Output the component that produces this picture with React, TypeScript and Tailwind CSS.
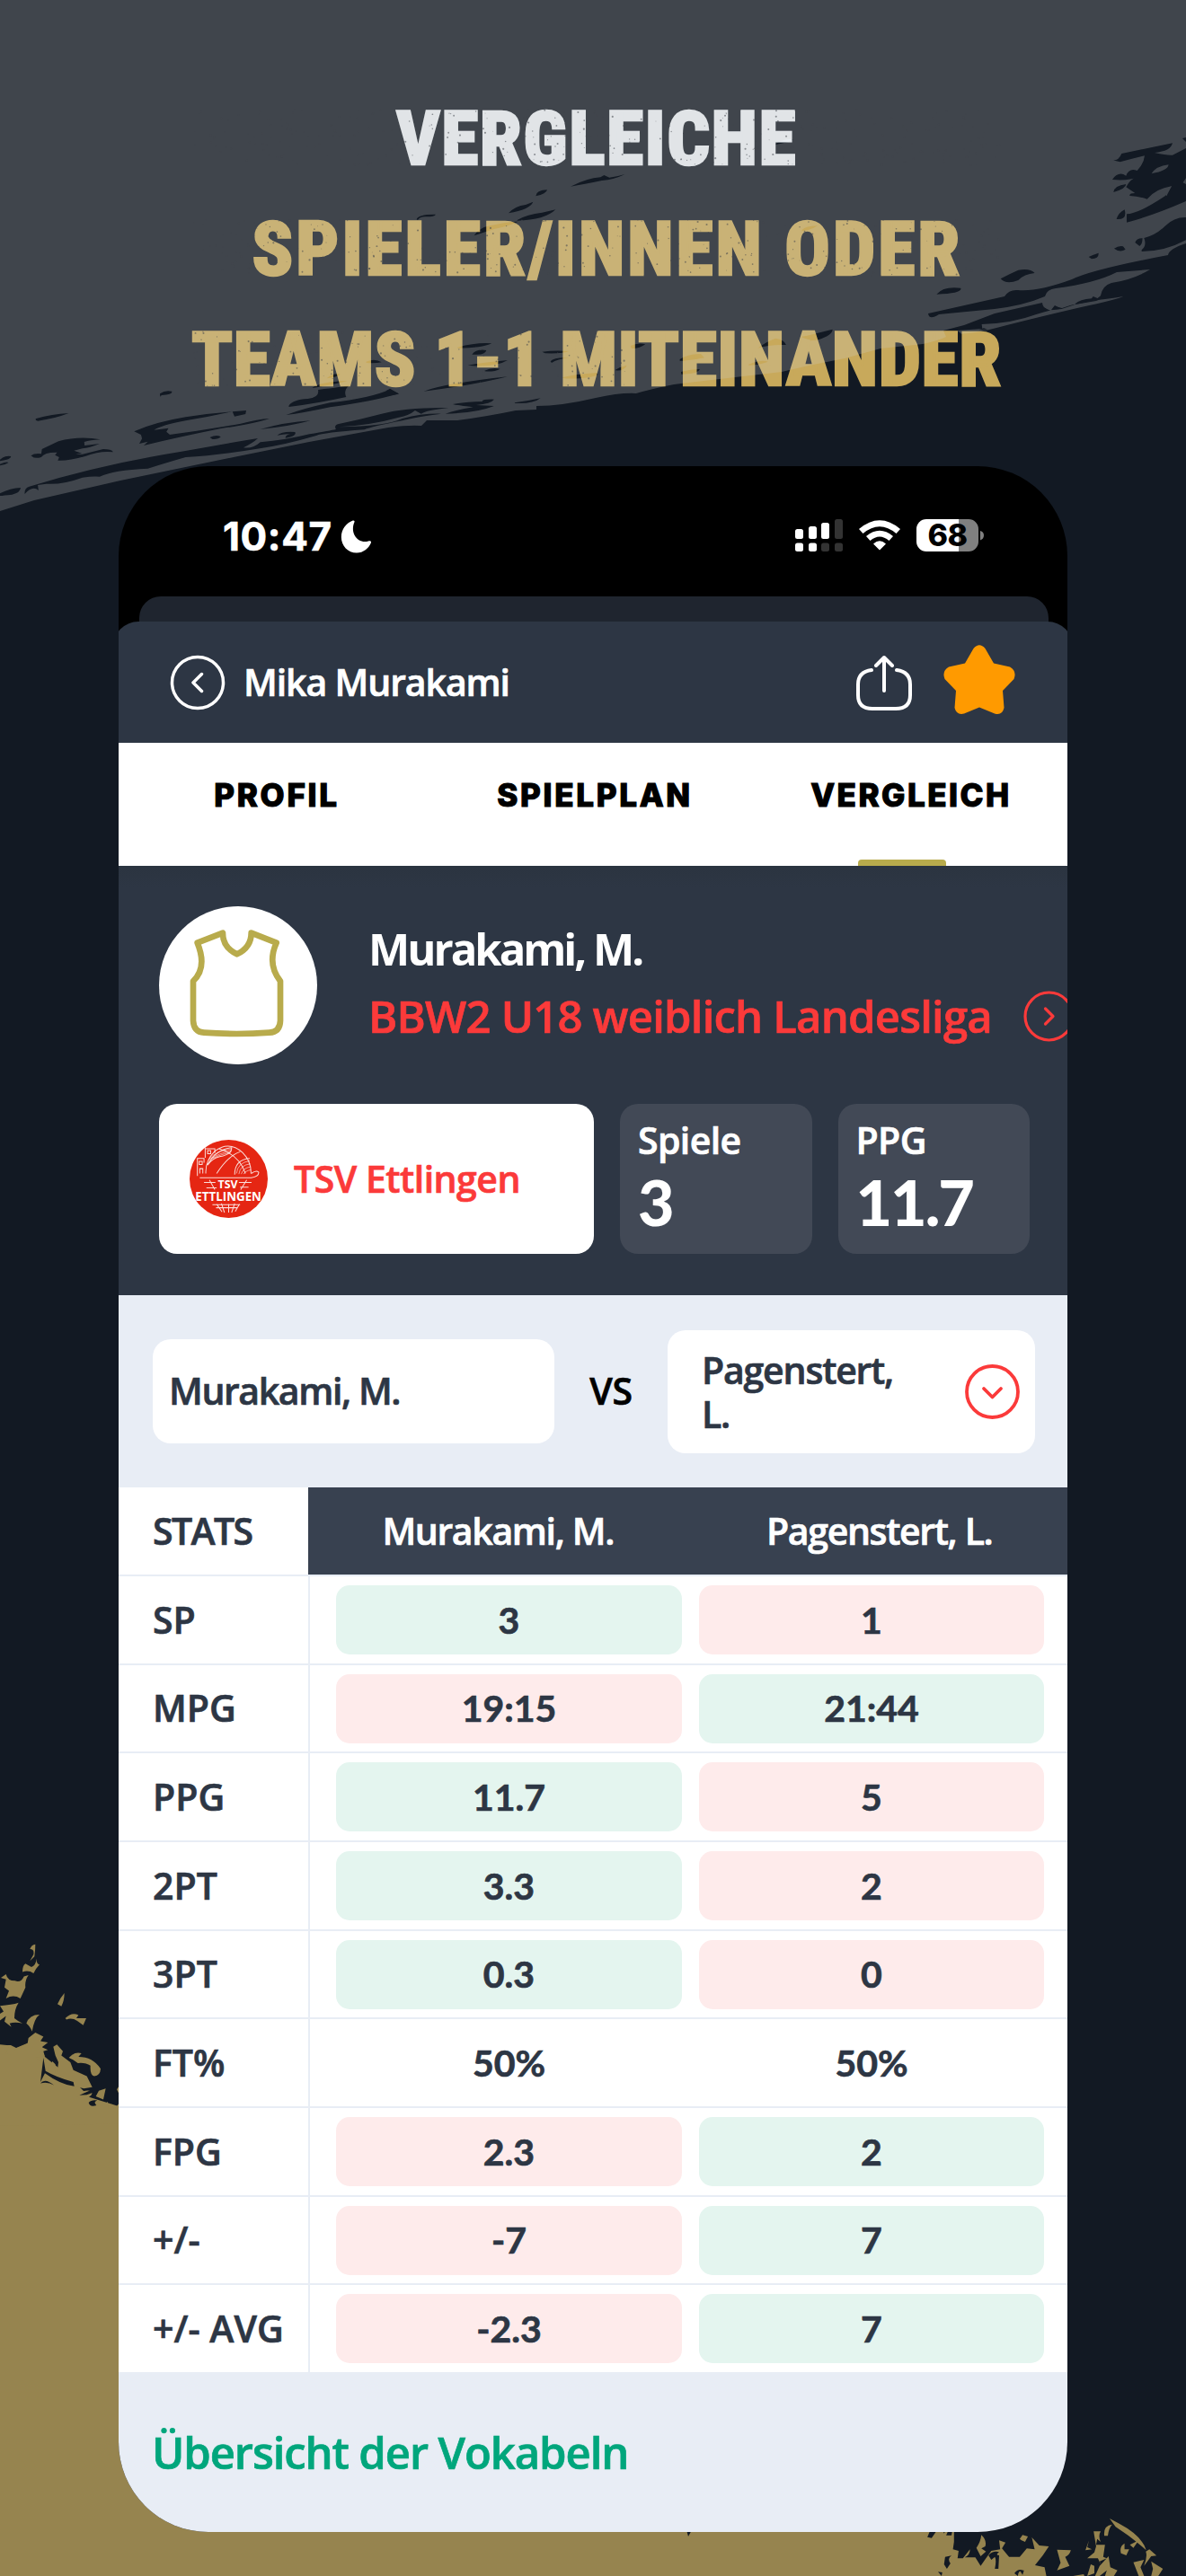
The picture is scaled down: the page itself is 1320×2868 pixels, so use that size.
import React from "react";

type Tone = "good" | "bad" | "even";
type Row = { label: string; left: string; right: string; l: Tone; r: Tone };

const rows: Row[] = [
  { label: "SP", left: "3", right: "1", l: "good", r: "bad" },
  { label: "MPG", left: "19:15", right: "21:44", l: "bad", r: "good" },
  { label: "PPG", left: "11.7", right: "5", l: "good", r: "bad" },
  { label: "2PT", left: "3.3", right: "2", l: "good", r: "bad" },
  { label: "3PT", left: "0.3", right: "0", l: "good", r: "bad" },
  { label: "FT%", left: "50%", right: "50%", l: "even", r: "even" },
  { label: "FPG", left: "2.3", right: "2", l: "bad", r: "good" },
  { label: "+/-", left: "-7", right: "7", l: "bad", r: "good" },
  { label: "+/- AVG", left: "-2.3", right: "7", l: "bad", r: "good" },
];

const toneClass: Record<Tone, string> = {
  good: "bg-[#e4f5ef]",
  bad: "bg-[#feebeb]",
  even: "bg-transparent",
};

/* Worn-ink specks scattered over the headline. */
const specks = (() => {
  let seed = 7;
  const rnd = () => {
    seed = (seed * 16807) % 2147483647;
    return seed / 2147483647;
  };
  const out: { x: number; y: number; r: number }[] = [];
  while (out.length < 900) {
    const x = 216 + rnd() * 900;
    const line = Math.floor(rnd() * 3);
    const y = 122 + line * 123 + rnd() * 62;
    const r = 0.4 + rnd() * 0.7;
    if (line === 2 && x > 700) continue;
    out.push({ x, y, r });
  }
  return out;
})();

function BrushTop() {
  return (
    <svg className="pointer-events-none absolute inset-x-0 top-0 h-[620px] w-[1320px]" viewBox="0 0 1320 620" aria-hidden="true">
      <mask id="brush" maskUnits="userSpaceOnUse" x="0" y="0" width="1320" height="620">
        <rect width="1320" height="620" fill="#fff" />
        <g fill="#000">
          <path d="M0 569 38 557 134 535 245 512 344 492 432 476Q455 473 469 474L475 468H509Q540 464 574 457L597 456V452Q625 452 663 443 690 437 708 438 725 433 750 428L870 414 900 407 940 399 980 388 1027 383Q1045 379 1053 375L1050 368 1073 362 1107 349 1160 337Q1160 343 1170 346L1174 341 1182 343 1197 338 1220 330 1225 329Q1227 318 1237 315 1262 311 1280 300L1243 303Q1220 315 1175 321 1165 322 1163 330 1140 340 1107 344L1045 350Q1034 357 1033 349L1118 330Q1123 322 1133 323 1155 325 1193 311 1215 300 1300 284 1301 277 1320 271V620H0Z" />
          <g transform="translate(0 360) scale(.3827 .3333)">
            <path d="M105 318Q150 303 200 300 160 318 110 326Q100 322 105 318ZM465 235Q480 222 500 227 503 238 470 240L466 245ZM90 442Q100 433 120 436L122 420Q150 405 170 394 230 375 292 388 262 390 245 396L246 408 290 402Q260 416 240 418L215 425 238 434Q205 440 240 437L300 420Q325 420 329 430 290 425 250 443 200 460 168 458L172 447 160 440 166 431Q130 430 120 447 100 454 90 442ZM0 455Q15 440 32 444 32 455 0 460ZM0 470Q20 460 25 465 12 475 0 475ZM390 361Q450 330 540 313 610 300 675 295 610 312 540 325 470 340 448 356L490 350 484 362 494 372Q470 380 455 378 580 360 700 335 750 320 784 318 740 335 640 352 520 380 418 408L430 395 405 402 413 385 410 372ZM676 295 716 291 714 303 682 311ZM610 381Q630 370 642 379 635 388 618 387ZM0 568Q30 550 60 549 60 565 35 572 10 575 0 576ZM72 570Q70 550 85 545 300 470 520 430 690 395 750 384 735 400 708 415 735 420 757 397 830 390 900 370 960 358 977 354 970 340 985 336 1050 320 1110 302 1180 280 1305 282 1240 290 1225 302L1207 291Q1190 308 1160 314 1080 340 985 346 1120 345 1170 318 1230 300 1283 302 1200 315 1170 325 1080 345 1060 355 940 365 920 375 830 405 760 417 640 440 540 447 500 460 430 485 330 490 290 512 270 510 240 515 180 540 135 536L110 540 112 558Q95 540 72 570ZM756 354Q830 330 903 325 840 345 756 354ZM806 374Q820 360 858 363 865 376 830 383 830 372 845 370 830 368 806 374ZM840 275Q850 255 895 252 930 248 925 222 1000 212 1015 208 998 225 1007 246 920 268 840 279ZM832 306Q880 285 960 265 1080 250 1135 220L1160 235Q1080 262 960 280 880 300 832 306ZM908 216Q930 195 1010 192 980 203 908 216ZM950 184Q970 165 990 170 980 180 950 184ZM1065 128Q1090 115 1110 130 1090 135 1065 132Z" />
          </g>
          <g transform="translate(430 90) scale(.3333)">
            <path d="M615 353Q670 325 715 322L727 315 745 323Q770 320 797 312 760 330 720 333 660 345 615 353ZM499 385Q500 365 537 364 535 378 499 385ZM408 442Q430 418 465 414L490 404Q480 430 408 442ZM437 465Q470 445 520 440L565 430Q530 465 437 467ZM101 463Q105 445 165 446 160 455 130 454 110 455 105 465ZM293 517Q310 490 345 484 400 470 440 470 410 485 360 495ZM1300 210Q1330 192 1358 196 1350 205 1300 213ZM238 890Q300 873 352 877 320 893 238 893ZM286 914Q300 895 334 900 330 915 300 914ZM272 950Q330 940 405 933 370 955 290 952ZM328 968Q350 957 380 962 360 973 328 970ZM125 1037Q200 1010 405 988 300 1015 125 1037ZM520 905Q560 900 610 903 590 912 530 910ZM548 937Q560 922 610 925 570 930 552 942ZM590 990Q630 980 700 975 720 982 680 990 620 998 590 993ZM765 965Q780 955 803 950 795 970 765 967ZM815 885Q840 873 865 880 840 897 818 893ZM980 930Q1010 912 1050 912L1062 925Q1020 935 980 935ZM984 972Q1010 964 1047 963 1040 980 985 980ZM1240 893Q1270 870 1300 860 1330 865 1335 882 1280 880 1240 893ZM1210 947Q1250 930 1275 938 1240 950 1210 950ZM1385 855Q1410 850 1490 830 1490 850 1440 865 1410 868 1385 855ZM1388 498Q1400 485 1440 484 1420 498 1388 502ZM222 1080Q260 1073 320 1071 320 1063 360 1064 350 1078 300 1083L360 1086Q300 1110 197 1112 230 1100 290 1090 240 1085 222 1080ZM428 1075Q470 1070 515 1060 490 1080 430 1077ZM0 1035 12 1028 42 1046 0 1053Z" />
          </g>
          <g transform="translate(900 130) scale(.3333)">
            <path d="M1014 145Q1035 148 1045 123L1215 88Q1210 115 1155 120 1200 130 1215 128L1260 105V282Q1150 330 1062 353V325Q1100 325 1190 265L1212 232Q1160 240 1130 275 1100 265 1072 264 1070 255 1090 255L1060 235Q1075 205 1100 200 1070 215 1014 210 1035 180 1060 197 1070 170 1097 180 1120 155 1122 130 1080 140 1040 151ZM1018 252Q1020 230 1060 225 1060 240 1018 252ZM1028 342Q1035 320 1055 310 1065 345 1028 342ZM1248 72 1260 69V84ZM1090 420Q1095 405 1115 406 1115 425 1105 432ZM1112 445Q1130 430 1120 405 1160 395 1190 365 1220 335 1260 336V412Q1190 450 1112 450ZM1020 440Q1035 430 1050 433L1058 443Q1040 455 1020 440ZM935 468Q950 460 968 455 970 475 945 475ZM641 541Q670 525 700 512 740 505 755 522 720 525 700 546 660 562 641 541ZM427 593Q450 565 508 572 515 590 427 593ZM5 740Q40 725 62 722 50 745 5 748Z" />
          </g>
        </g>
        <g fill="#fff" transform="translate(900 130) scale(.3333)">
          <path d="M497 714 580 708 578 693Q680 690 760 660 820 640 845 642L890 627 960 612Q1010 608 1050 600 1040 608 900 638 720 680 600 712 540 725 510 725ZM1145 190Q1160 165 1202 160 1200 180 1145 190ZM1186 256Q1185 240 1212 232L1195 265ZM1250 220 1260 205V225Z" />
          <path d="M795 590H960L975 598 960 610 890 627 820 632 810 647 785 635Z" />
        </g>
        <g fill="#000" transform="translate(900 130) scale(.3333)">
          <path d="M890 625Q905 610 945 607L950 600 970 608 1000 600 960 615 890 627ZM810 645 822 630 845 642ZM568 712 585 706 598 712Z" />
        </g>
      </mask>
      <rect width="1320" height="620" fill="#cfcfcb" fillOpacity=".246" mask="url(#brush)" />
      <g fill="#41454c" fillOpacity=".55">
        {specks.map((s, i) => (
          <circle key={i} cx={s.x} cy={s.y} r={s.r} />
        ))}
      </g>
    </svg>
  );
}

function BrushBottom() {
  return (
    <svg className="pointer-events-none absolute inset-x-0 bottom-0 h-[768px] w-[1320px]" viewBox="0 2100 1320 768" fill="#96844f" aria-hidden="true">
      <path d="M132 2345V2700L250 2800H1004L1010 2868H0V2277L12 2277 18 2280 30 2275 44 2268 50 2290 75 2310 100 2335Z" />
      <g transform="translate(0 2100) scale(.3333 .4898)">
        <path d="M0 360 30 362 20 380 38 385 55 368 92 358 95 345 118 333 145 342 135 352 160 355 140 366 160 372 130 378 150 385 118 390 140 400 135 445 180 452 205 440 250 455 270 480 300 480 310 498 340 500 360 490 362 508 375 495 380 508 396 495V540L0 545Z" />
        <path d="M3 208 20 200Q25 215 50 215 70 220 80 205L95 202Q82 215 85 230 75 245 68 255 45 245 20 255L30 238 15 230 20 212ZM75 195Q75 180 85 176L105 184Q120 180 122 165 122 178 132 178 118 188 112 198 95 190 75 195ZM100 170 112 155Q115 143 100 143 105 133 118 132 118 145 115 160ZM0 272Q40 270 62 265 48 280 48 300 62 308 75 312 50 308 32 312L38 320 15 308 20 295 0 305V290L12 285ZM88 312Q98 292 132 292 115 300 107 330 100 318 88 312ZM192 268Q200 255 215 243 215 260 205 273ZM218 300Q240 285 262 293L255 300 288 300 278 316 258 306Q240 298 222 303ZM178 365 190 360 210 375 205 385 235 400 245 418 290 432 308 457 280 460 250 455 215 432 190 428 195 400 185 385ZM230 390Q250 375 272 380L262 388Q310 388 336 415 335 430 315 432 300 430 302 408 285 400 260 402L245 395ZM150 428 175 398 185 405 185 425ZM256 480Q270 462 300 465 315 470 300 478ZM320 478 330 465 353 460 345 485ZM390 462 396 456V470Z" />
        <path fill="#121923" d="M145 390 152 420Q190 435 245 445L248 455Q200 450 150 425L135 445ZM135 448Q150 435 180 452 160 444 135 448ZM265 475 305 463 315 468 290 474ZM296 492Q305 485 325 487 310 490 322 498 300 503 296 492Z" />
      </g>
      <g transform="translate(700 2600) scale(.3954 .3333)">
        <path d="M0 655H915V690L912 715 928 720 925 745 940 745 960 715Q960 735 945 742L975 742 990 770 1005 745 1020 720 1045 715 1042 685 1060 692 1050 712 1070 740 1100 740 1120 712 1142 715 1134 675 1155 702 1182 705 1165 735 1143 768 1170 775 1175 804H0ZM978 710Q990 690 992 667 1008 685 1003 705L992 712 1005 722 990 738ZM1100 680 1108 667 1123 672 1115 690 1105 685ZM1205 716 1244 718Q1240 735 1228 740L1240 770 1205 785 1215 760ZM1285 718 1295 685 1290 708 1303 715ZM1308 655 1328 655Q1320 670 1328 690L1318 680 1315 700 1340 700 1335 740 1345 745 1325 755 1330 770 1320 745 1290 745 1310 725 1315 705ZM1338 670Q1335 635 1360 632 1350 645 1348 670ZM1353 612 1378 628Q1445 670 1456 718 1430 690 1405 668L1370 640ZM1385 728Q1380 705 1395 695L1395 715 1408 715 1400 735ZM1410 700 1435 685 1420 710ZM1450 770Q1460 740 1455 722L1465 715 1485 736 1470 738ZM1420 758 1450 750 1440 775 1450 804H1435ZM1470 755 1503 780 1490 804H1470L1475 780ZM1290 804 1300 765 1310 770 1310 795ZM1312 804 1325 770 1350 738 1355 775 1375 785 1365 804H1340L1345 785 1325 804ZM1250 804 1280 798 1282 804Z" />
        <path fill="#121923" d="M163 655H175L167 672ZM847 655H865L852 677 840 674ZM885 655H890L887 662ZM893 668 898 655H910L908 668ZM887 765 890 740 908 736Q895 745 905 762L895 780ZM870 790 882 792 880 804ZM1012 735Q1025 718 1042 724 1030 735 1042 735L1040 780H1030Q1035 750 1030 740L1020 750ZM1085 795Q1095 778 1110 785 1095 785 1095 804ZM1100 785H1112L1108 800Z" />
      </g>
    </svg>
  );
}

function StatusIcons() {
  return (
    <svg className="h-9 w-[210px] overflow-visible" viewBox="0 0 210 36" aria-hidden="true">
      <g fill="#fff">
        <rect y="11" width="9" height="11" rx="2.5" />
        <rect x="15" y="8" width="9" height="14" rx="2.5" />
        <rect x="29" y="4" width="9" height="18" rx="2.5" />
        <rect y="26.500" width="9" height="9.500" rx="2.500" />
        <rect x="15" y="26.500" width="9" height="9.500" rx="2.500" />
      </g>
      <g fill="#333">
        <rect x="44" width="9" height="22" rx="2.500" />
        <rect x="29" y="26.500" width="9" height="9.500" rx="2.500" />
        <rect x="44" y="26.500" width="9" height="9.500" rx="2.500" />
      </g>
      <g fill="#fff">
        <path d="M71 11Q94-8.500 117 11L112.500 16Q94 .5 75.500 16ZM79 19Q94 6.500 109 19L104.500 24Q94 15 83.500 24ZM87 27.500Q94 21 101 27.500L94 34.500Z" />
        <path d="M146 0H182V36H146A11 11 0 0 1 135 25V11A11 11 0 0 1 146 0Z" />
      </g>
      <path fill="#808080" d="M182 0H193A11 11 0 0 1 204 11V25A11 11 0 0 1 193 36H182ZM206 13Q210 14 210 18T206 23.500Z" />
      <text x="169.500" y="30" textAnchor="middle" fontFamily="Inter" fontWeight="800" fontSize="34" letterSpacing="-.5" fill="#000">68</text>
    </svg>
  );
}

function ClubLogo() {
  return (
    <svg className="size-[87px] shrink-0" viewBox="0 0 260 260" aria-hidden="true">
      <defs>
        <clipPath id="disc"><circle cx="130" cy="130" r="130" /></clipPath>
      </defs>
      <g clipPath="url(#disc)">
        <rect width="260" height="260" fill="#e52613" />
        <g fill="none" stroke="#fff" strokeWidth="3" strokeOpacity=".85">
          <path d="M54 112Q52 70 84 38 130 2 176 42 206 72 204 112M90 112Q130 52 168 40M98 30Q165 50 186 112M60 82Q90 30 140 26 140 50 100 56 75 62 60 84M150 116Q150 66 200 62" />
          <path d="M64 66Q90 34 138 32M70 64Q100 42 140 38M76 62Q110 46 136 44M156 112Q160 76 200 70M164 114Q168 84 202 80M172 114Q178 94 202 90M180 114Q184 104 204 100" strokeWidth="2" />
          <path d="M26 120V62H48V76M34 112V96H44V112M32 72H42V82H32ZM52 60V20L78 4M54 30H84V44M60 36H70V46H60ZM34 126H205Q230 122 230 108 222 100 205 112" />
          <path d="M48 142H86M56 160H90M66 134 84 166M164 142H206M168 158H196M190 134 170 166M76 216H168M88 226H158M90 214 108 240M106 212 116 242M130 214V242M150 212 140 242M166 214 152 238" />
        </g>
        <text x="127" y="162" textAnchor="middle" fontFamily="Open Sans" fontWeight="700" fontSize="37" fill="#fff">TSV</text>
        <text x="129" y="203" textAnchor="middle" fontFamily="Open Sans" fontWeight="700" fontSize="41" textLength="220" lengthAdjust="spacingAndGlyphs" fill="#fff">ETTLINGEN</text>
      </g>
    </svg>
  );
}

function StatCard({ label, value }: { label: string; value: string }) {
  return (
    <div className="flex h-[167px] w-[213.500px] flex-col rounded-[20px] bg-[#424956] pt-[13px] pl-5 text-white">
      <span className="text-[41px] leading-[54px] font-semibold tracking-[-0.600px] [-webkit-text-stroke:0.7px]">{label}</span>
      <span className="text-[70px] leading-[84px] font-black tracking-[-2px] font-[Lato]">{value}</span>
    </div>
  );
}

export default function App() {
  return (
    <main className="relative flex h-[2868px] w-[1320px] flex-col items-center overflow-hidden bg-[#121923] font-['Open_Sans',sans-serif]">
      <h1 className="flex h-[519px] flex-col items-center pt-[93px] pl-2 text-center font-[Roboto] text-[84px] leading-[123px] font-extrabold font-stretch-75% text-[#c8a95b] [-webkit-text-stroke:2.500px] [stroke-linejoin:round]">
        <span className="tracking-[1.500px] text-[#e7ecf1]">VERGLEICHE</span>
        <span className="pl-6 tracking-[3px]">SPIELER/INNEN ODER</span>
        <span className="tracking-[0.600px]">TEAMS 1-1 MITEINANDER</span>
      </h1>
      <BrushTop />
      <BrushBottom />

      <div className="relative flex h-[2300px] w-[1056px] flex-col overflow-hidden rounded-[100px] bg-black">
        <div className="flex h-[145px] shrink-0 items-start justify-between pt-[59px] pr-[93px] pl-[116px]">
          <div className="flex items-center gap-2 text-white">
            <span className="font-[Inter] text-[44px] leading-[38px] font-bold tracking-[0.600px] [-webkit-text-stroke:0.6px]">10:47</span>
            <svg className="size-[37px]" viewBox="0 0 36 40" fill="#fff" aria-hidden="true">
              <path d="M14 .6C15 0 16.500 1 15.800 2.500 10 16 20 29 32.500 25.500 34.500 24.800 36.300 25.500 35.800 27.300 33 34 26.500 39.500 18.500 39.500 8 39.500 0 31 0 20.500 0 11 6 3.500 14 .6Z" />
            </svg>
          </div>
          <StatusIcons />
        </div>
        <div className="mr-[21px] ml-[23px] h-7 shrink-0 rounded-t-3xl bg-[#1f252f]" />
        <header className="-mx-1.5 flex h-[135px] shrink-0 items-center rounded-t-[28px] bg-[#2d3644] pr-16 pl-[63px]">
          <svg className="size-[62px]" viewBox="0 0 62 62" fill="none" stroke="#fff" strokeWidth="3.500" strokeLinecap="round" strokeLinejoin="round" aria-hidden="true">
            <circle cx="31" cy="31" r="28.500" />
            <path d="M35.500 21.500 26 31l9.500 9.500" />
          </svg>
          <span className="ml-5 grow text-[41px] font-semibold tracking-[-1.100px] text-white [-webkit-text-stroke:0.7px]">Mika Murakami</span>
          <svg className="size-[62px]" viewBox="0 0 62 62" fill="none" stroke="#fff" strokeWidth="4" strokeLinecap="round" strokeLinejoin="round" aria-hidden="true">
            <path d="M17 17Q2 19 2 33V45Q2 60 18 60H44Q60 60 60 45V33Q60 19 45 17M31 40V3M22 12 31 3l9 9" />
          </svg>
          <svg className="mb-[6px] ml-[35px] h-[78px] w-[80px]" viewBox="0 0 80 78" fill="#ff9a00" aria-hidden="true">
            <path d="M33.500 4Q40-3.500 46.500 4L56 20.500 74 24.500Q82 29 78.500 38L66 51 67.500 70Q65.500 79 57 76.500L40 69.500 23 76.500Q14.500 78.500 12.500 70L14 51 1.500 38Q-2 29 6 24.500L24 20.500Z" />
          </svg>
        </header>

        <nav className="grid h-[137px] shrink-0 grid-cols-3 bg-white text-center font-[Inter] text-[35px] font-extrabold text-black [-webkit-text-stroke:1.100px]">
          <span className="pt-[32px] tracking-[2.700px]">PROFIL</span>
          <span className="pt-[32px] pl-1 tracking-[2.700px]">SPIELPLAN</span>
          <span className="flex flex-col items-center justify-between pt-[32px] pl-1 tracking-[2.500px]">
            <span>VERGLEICH</span>
            <span className="-ml-[20px] h-[7px] w-[98px] rounded-t bg-[#b8ab4c]" />
          </span>
        </nav>

        <section className="flex h-[478px] shrink-0 flex-col bg-[#2d3644] bg-linear-to-b from-[#2b3440] to-[#2d3644] to-5% pt-[45px] pl-[45px]">
          <div className="flex h-[176px]">
            <div className="flex size-[176px] shrink-0 items-center justify-center rounded-full bg-white">
              <svg className="size-[176px]" viewBox="0 0 528 528" fill="none" stroke="#b8ab4c" strokeWidth="20" strokeLinejoin="round" aria-hidden="true">
                <path d="M128 122 213 89Q212 137 260 160 308 137 308 89L392 122Q360 193 405 250V382Q404 420 368 422 260 430 150 422 116 420 114 382V250Q162 205 128 122Z" />
              </svg>
            </div>
            <div className="ml-[57px] flex flex-col pt-[9px]">
              <span className="text-[49px] leading-[76px] font-bold tracking-[-3px] text-white">Murakami, M.</span>
              <div className="flex items-center">
                <span className="w-[729px] shrink-0 text-[49px] leading-[74px] font-semibold tracking-[-0.800px] whitespace-nowrap text-[#fb3a3a] [-webkit-text-stroke:0.7px]">BBW2 U18 weiblich Landesliga</span>
                <svg className="size-[57px] shrink-0" viewBox="0 0 57 57" fill="none" stroke="#fb3a3a" strokeWidth="3.200" strokeLinecap="round" strokeLinejoin="round" aria-hidden="true">
                  <circle cx="28.500" cy="28.500" r="26.500" />
                  <path d="m24.500 20 8.500 8.500-8.500 8.500" />
                </svg>
              </div>
            </div>
          </div>
          <div className="mt-11 flex">
            <div className="flex h-[167px] w-[484px] items-center rounded-[20px] bg-white pl-[34px]">
              <ClubLogo />
              <span className="ml-[29px] text-[41px] font-semibold tracking-[-0.500px] text-[#fb3a3a] [-webkit-text-stroke:0.7px]">TSV Ettlingen</span>
            </div>
            <div className="ml-[29px] flex gap-[29px]">
              <StatCard label="Spiele" value="3" />
              <StatCard label="PPG" value="11.7" />
            </div>
          </div>
        </section>

        <section className="flex h-[214px] shrink-0 items-center bg-[#e8edf5] pl-[38px] text-[41px] font-semibold text-[#2d3644] [-webkit-text-stroke:0.7px]">
          <div className="flex h-[116px] w-[447px] items-center rounded-[20px] bg-white pl-[18px] tracking-[-1.400px]">Murakami, M.</div>
          <div className="w-[126px] text-center tracking-[-0.400px] text-black">VS</div>
          <div className="flex h-[137px] w-[409px] items-center justify-between rounded-[20px] bg-white pr-[17px] pl-[38px]">
            <span className="w-[230px] pt-0.5 leading-[49px] tracking-[-1.200px]">Pagenstert, L.</span>
            <svg className="size-[61px]" viewBox="0 0 61 61" fill="none" stroke="#fb3a3a" strokeWidth="3.800" strokeLinecap="round" strokeLinejoin="round" aria-hidden="true">
              <circle cx="30.500" cy="30.500" r="28.500" />
              <path d="m21 27 9.500 9.500L40 27" />
            </svg>
          </div>
        </section>

        <section className="flex h-[985px] shrink-0 flex-col bg-white text-[41px] font-semibold text-[#2d3644] [-webkit-text-stroke:0.7px]">
          <div className="flex h-[97px] shrink-0">
            <div className="flex w-[211px] items-center pl-[38px] tracking-[-1.600px]">STATS</div>
            <div className="grid grow grid-cols-2 items-center bg-[#384150] text-center tracking-[-1.350px] text-white">
              <span>Murakami, M.</span>
              <span className="pl-1">Pagenstert, L.</span>
            </div>
          </div>
          {rows.map((r) => (
            <div key={r.label} className="flex flex-1 border-t-[2.500px] border-[#e8edf5]">
              <div className="flex w-[211px] items-center pl-[38px] whitespace-nowrap">{r.label}</div>
              <div className="flex grow items-center gap-[19px] border-l-2 border-[#e8edf5] pl-[29px] font-[Lato] font-bold">
                <span className={`flex h-[77px] w-[385px] items-center justify-center rounded-[15px] ${toneClass[r.l]}`}>{r.left}</span>
                <span className={`flex h-[77px] w-[384px] items-center justify-center rounded-[15px] ${toneClass[r.r]}`}>{r.right}</span>
              </div>
            </div>
          ))}
        </section>

        <footer className="h-[178px] shrink-0 bg-[#e8edf5] pt-[54px] pl-[37px] text-[49px] leading-[70px] font-semibold tracking-[-1.100px] text-[#00a67c] [-webkit-text-stroke:0.7px]">
          Übersicht der Vokabeln
        </footer>
      </div>
    </main>
  );
}
